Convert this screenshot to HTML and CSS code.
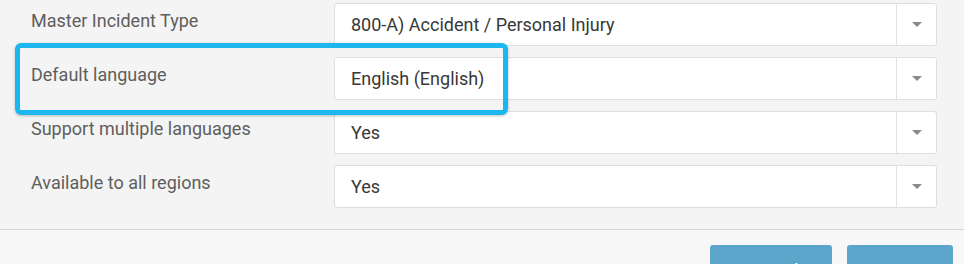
FILE: index.html
```html
<!DOCTYPE html>
<html lang="en">
<head>
<meta charset="utf-8">
<link rel="stylesheet" href="styles.css">
</head>
<body>
<div class="page">
  <div class="form">
    <div class="row">
      <div class="label">Master Incident Type</div>
      <div class="select"><span class="value">800-A) Accident / Personal Injury</span><span class="arrow"><i></i></span></div>
    </div>
    <div class="row">
      <div class="label">Default language</div>
      <div class="select"><span class="value">English (English)</span><span class="arrow"><i></i></span></div>
    </div>
    <div class="row">
      <div class="label">Support multiple languages</div>
      <div class="select"><span class="value">Yes</span><span class="arrow"><i></i></span></div>
    </div>
    <div class="row">
      <div class="label">Available to all regions</div>
      <div class="select"><span class="value">Yes</span><span class="arrow"><i></i></span></div>
    </div>
    <div class="highlight"></div>
  </div>
  <div class="footer">
    <button class="btn cancel">Cancel</button>
    <button class="btn save">Save</button>
  </div>
</div>
</body>
</html>
```

FILE: styles.css
```css
html, body {
  margin: 0;
  padding: 0;
  background: #f4f4f4;
  font-family: Roboto, "Liberation Sans", sans-serif;
  overflow: hidden;
}

.page {
  width: 964px;
  height: 264px;
  overflow: hidden;
}

.form {
  position: relative;
  padding: 3px 27px 0 31px;
  display: flex;
  flex-direction: column;
  gap: 11px;
  border-bottom: 1px solid #d6d6d6;
  box-sizing: border-box;
  height: 230px;
}

.row {
  display: grid;
  grid-template-columns: 303px 1fr;
  height: 43px;
}

.label {
  font-size: 18px;
  color: #5e5e5e;
  padding-top: 7px;
  line-height: 21px;
}

.select {
  display: flex;
  align-items: stretch;
  background: #fff;
  border: 1px solid #dedede;
  border-radius: 3px;
  box-sizing: border-box;
  height: 43px;
}

.value {
  flex: 1;
  display: flex;
  align-items: center;
  padding: 0 0 0 16px;
  font-size: 18px;
  color: #383838;
}

.arrow {
  width: 39px;
  border-left: 1px solid #e2e2e2;
  display: flex;
  align-items: center;
  justify-content: center;
}

.arrow i {
  width: 0;
  height: 0;
  border-left: 5px solid transparent;
  border-right: 5px solid transparent;
  border-top: 5px solid #8a8a8a;
  margin-top: -1px;
}

.highlight {
  position: absolute;
  left: 15px;
  top: 43px;
  width: 493px;
  height: 72px;
  box-sizing: border-box;
  border: 5px solid #1bb7ee;
  border-radius: 6px;
  box-shadow: 0 1px 3px rgba(0, 0, 0, 0.25);
}

.footer {
  background: #f7f7f7;
  display: flex;
  justify-content: flex-end;
  gap: 15px;
  padding: 15px 11px 0 0;
  height: 34px;
}

.btn {
  height: 40px;
  border: none;
  border-radius: 3px;
  background: #5ba5cb;
  color: #fff;
  font-family: Roboto, "Liberation Sans", sans-serif;
  font-size: 18px;
  padding: 11px 0 0;
  align-self: flex-start;
  line-height: 21px;
  flex: none;
}

.cancel { width: 122px; }
.save { width: 106px; }
```
